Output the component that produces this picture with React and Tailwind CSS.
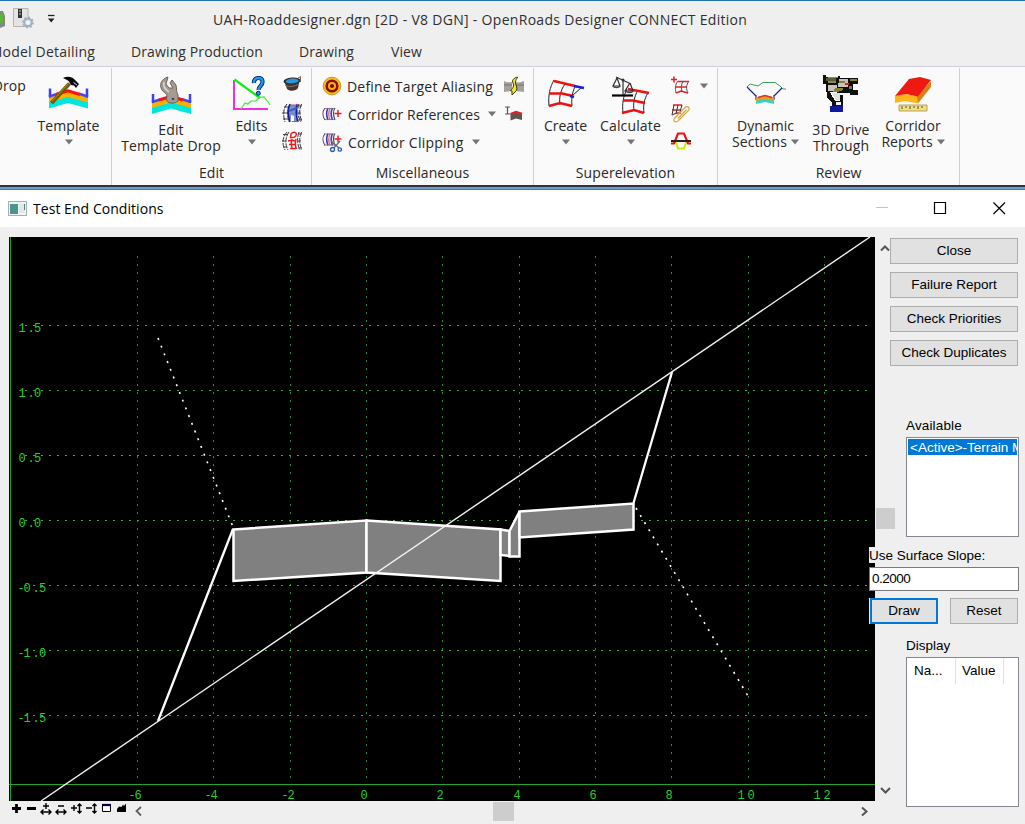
import React from "react";

/* ---------- icons ---------- */

function Bands() {
  return (
    <g>
      <path d="M1 32.500 V25 L20 20 L40 25 V32.500 L20 27 Z" fill="#00e5dc" />
      <path d="M1 26.500 V20 L20 14 L40 20 V26.500 L20 21 Z" fill="#f9b000" />
      <path d="M1 20.500 L10 17.700 M31 17.700 L40 20.500" fill="none" stroke="#4848f0" strokeWidth="2.500" />
      <path d="M8 18.500 L20 14.700 L32 18.500" fill="none" stroke="#ff1010" strokeWidth="3" />
      <path d="M2 12.500 V21.500 M39 12.500 V21.500" stroke="#4040ee" strokeWidth="2.500" />
    </g>
  );
}

const TemplateIcon = () => (
  <svg width="41" height="36" viewBox="0 0 41 36">
    <Bands />
    <path d="M3.500 27 L21.500 7.500" stroke="#6b5608" strokeWidth="4" />
    <path d="M4 25.500 L20.500 7.500" stroke="#93801c" strokeWidth="1.200" />
    <path d="M15 2 C20 -.5 25 1 28 5 L31 8 L28 12 L26 9.500 L23 9 L21 5.500 C19 3.500 17 3 15 2Z" fill="#080808" />
    <path d="M25.500 6.500 L29 9" stroke="#ddd" strokeWidth="1" />
  </svg>
);

const EditTemplateIcon = () => (
  <svg width="41" height="40" viewBox="0 0 41 40">
    <g transform="translate(0 5.500)"><Bands /></g>
    <path d="M17 1 C10 3 8 9 11 14 C13 17 15 17 16 19 L15.500 24 C17 28 24 28 27 25 L27 19 C25 16 26 13 25 9 L21 4 L19 7 L22 12 L18 12 L15 8 Z" fill="#a39b94" stroke="#6d6259" strokeWidth="1" />
    <path d="M13 6 C12 11 14 13 18 16" stroke="#ddd7d0" strokeWidth="1.500" fill="none" />
    <circle cx="22" cy="23" r="1.300" fill="#4e4844" />
  </svg>
);

const EditsIcon = () => (
  <svg width="39" height="36" viewBox="0 0 39 36">
    <path d="M2 4 V33 H36" fill="none" stroke="#f02ee0" strokeWidth="2" />
    <path d="M2.500 3.500 L28 22" stroke="#10f010" strokeWidth="2.300" />
    <path d="M9 33 L13 27 L16 28 L19 25 L24 25 L27 21.500 L32 21 L36 26 L38 29" fill="none" stroke="#32f032" strokeWidth="1.200" />
    <path d="M22 7 C21 1 31 0 30.500 6 C30.500 10 26.500 10 26.500 14" fill="none" stroke="#03275e" strokeWidth="4.200" />
    <path d="M22 7 C21 1 31 0 30.500 6 C30.500 10 26.500 10 26.500 14" fill="none" stroke="#159aff" strokeWidth="2.400" />
    <circle cx="26.300" cy="17.300" r="2" fill="#159aff" stroke="#03275e" />
  </svg>
);

const BucketIcon = () => (
  <svg width="20" height="20" viewBox="0 0 20 20">
    <path d="M2 5 L5 14 C8 17 14 16 16 13 L18 4 Z" fill="#46352c" />
    <path d="M3 10 C7 13 13 11 17 9" stroke="#80736b" fill="none" />
    <ellipse cx="10" cy="6" rx="8.500" ry="3.500" fill="#3c2c24" transform="rotate(-5 10 6)" />
    <ellipse cx="10.200" cy="6" rx="6.500" ry="2.400" fill="#2299e2" transform="rotate(-5 10 6)" />
    <path d="M16 3 L18.500 1.500 V7" stroke="#756257" fill="none" />
  </svg>
);

function Corridor({ inner }) {
  return (
    <g fill="none">
      <path d="M5 1 C1 6 1 12 3 19 M8 1 C5 6 5 12 7 19 M17 1 C15 6 15 12 19 19 M19.500 1 C17 7 17 12 20 18" stroke="#28282f" strokeWidth="1" strokeDasharray="5 1" />
      <path d="M2 4 H7 M0 10 H6 M1 16 H6 M15 3 H20 M16 10 H19 M16 17 H20" stroke="#44444c" strokeWidth="1" />
      {inner}
    </g>
  );
}

const CorridorBlueIcon = () => (
  <svg width="20" height="20" viewBox="0 0 20 20">
    <Corridor
      inner={
        <g>
          <path d="M8 2 H14 L16 8 L14 13 L16 19 H10 L7 14 L5 8 Z" fill="#7390d0" />
          <path d="M8 1 C5 7 6 12 8 19 M15 1 C14 6 14 13 16 19" stroke="#1818a8" strokeWidth="1.600" />
          <path d="M9 12 L12 13 L12 18 H9 Z" fill="#fff" />
          <path d="M9 2 H15 M10 18.500 H16" stroke="#d84848" strokeWidth="1.200" />
          <path d="M7 8 L15 5" stroke="#3b63b8" strokeWidth="2" />
        </g>
      }
    />
  </svg>
);

const CorridorRedIcon = () => (
  <svg width="20" height="20" viewBox="0 0 20 20">
    <g fill="none">
      <path d="M5 1 C0 7 0 13 3 19 M7 1 C3 7 3 13 6 19 M17 1 C15 7 15 13 18 19 M19.500 1 C17 7 17 13 20 19" stroke="#38383f" strokeDasharray="5 1" />
      <path d="M1 3.500 H6 M0 10 H4 M1 16 H5 M16 3 H20 M16 10 H19 M16 17 H20" stroke="#44444c" />
      <path d="M9 3 C11 .5 14 1 14.500 3 C14 6 12 7 8.500 6.500 Z M6 10 L10 9 L14 10.500 M10 8 C9 12 9 15 10.500 18 M14 8 C13 12 13 15 14.500 18 M7 13.500 H14 M8 17.500 H14" stroke="#f21a1a" strokeWidth="1.500" />
    </g>
  </svg>
);

const TargetIcon = () => (
  <svg width="20" height="20" viewBox="0 0 20 20">
    <circle cx="10" cy="10" r="8.800" fill="#f6c01c" stroke="#c99a1e" />
    <circle cx="10" cy="10" r="5.300" fill="#f7b020" stroke="#8e0d08" strokeWidth="2.600" />
    <circle cx="10" cy="10" r="2.100" fill="#7e0806" />
  </svg>
);

function MiniCorridor() {
  return (
    <g fill="none">
      <path d="M3 4 C0 8 0 11 3 16 M13 4 C11 7 11 11 13 16" stroke="#444" strokeWidth="1.100" />
      <path d="M6 4 C4 8 4 11 6 16 M10.500 4 C8.500 8 8.500 11 10.500 16" stroke="#3f35b0" strokeWidth="1.600" />
      <path d="M8.200 4 C6.200 8 6.200 12 8.200 16" stroke="#d86e8e" strokeWidth="1.400" />
      <path d="M2 4.500 H12 M2 15.500 H13" stroke="#7a6a83" strokeWidth=".8" />
      <path d="M12.500 9.500 H19.500 M16 6 V13" stroke="#ee1c24" strokeWidth="1.500" />
    </g>
  );
}

const ReferenceIcon = () => (
  <svg width="20" height="20" viewBox="0 0 20 20"><MiniCorridor /></svg>
);

const ClippingIcon = () => (
  <svg width="20" height="22" viewBox="0 0 20 22">
    <g transform="translate(0 -1.500)"><MiniCorridor /></g>
    <path d="M9 10 L18 18 M18 10 L11 18" stroke="#6b7078" strokeWidth="1.400" />
    <circle cx="10.500" cy="18.500" r="2" fill="#fff" stroke="#2e58a8" strokeWidth="1.300" />
    <circle cx="17.700" cy="18.500" r="1.700" fill="#fff" stroke="#2e58a8" strokeWidth="1.300" />
  </svg>
);

const TerrainIcon = () => (
  <svg width="20" height="20" viewBox="0 0 20 20">
    <path d="M0 5 C3 7 5 6 8 6 V15 L0 16 Z M12 6 C15 7 17 6 20 5 V16 L12 15 Z" fill="#a5a09d" />
    <path d="M0 9 H8 M12 9 H20" stroke="#77706c" />
    <path d="M13.500 1 C10 2 7.500 4 9 7 C10.500 10 9 12 6.500 14.500 L8 15 L8 19 L12.500 14.500 C14 11 11 9 11.500 6 C11.500 4 13 3 13.500 1 Z" fill="#f4e32c" stroke="#3c3812" strokeWidth="1" />
  </svg>
);

const RoadEndIcon = () => (
  <svg width="20" height="18" viewBox="0 0 20 18">
    <path d="M1 2 H6 M3.500 2 V9 M1 9 H6" stroke="#555" strokeWidth="1.200" />
    <path d="M6.500 9 L12 6.500 L18 8.500 V15 L12 13.500 L6.500 15.500 Z" fill="#5d5552" />
    <path d="M6.500 9 L12 6.800 L18 8.800" fill="none" stroke="#df2028" strokeWidth="2" />
  </svg>
);

const CreateIcon = () => (
  <svg width="40" height="36" viewBox="0 0 40 36" fill="none">
    <path d="M8 4 C4 11 2 19 3 30 M19 8 C14 15 13 22 14 29 M30 9 C27 14 25 21 26 30 M36 11 L26 20" stroke="#222" strokeWidth="1" />
    <path d="M8 5 L29 10 M3 17.500 H16 L27 20 M3 30 L14 27 L26 30" stroke="#ee1010" strokeWidth="2.600" />
    <path d="M28 10 L38 12 M24 20 L28 21" stroke="#1520df" strokeWidth="2.500" />
  </svg>
);

const CalculateIcon = () => (
  <svg width="40" height="42" viewBox="0 0 40 42" fill="none">
    <path d="M16 13 C12 21 11 28 12 37 M27 14 C23 21 22 28 23 35 M37 17 C33 23 32 30 33 37" stroke="#222" />
    <path d="M17 13 L38 17 M12 24.500 H22 L34 27 M11 37 L23 34 L33 37" stroke="#ee1010" strokeWidth="2.600" />
    <path d="M12 19 V4 M5 1 L20 8 M6 2 L2 10 H9 L6 2 M19 7 L14 15 H22 L19 7" stroke="#303030" strokeWidth="1.200" />
    <path d="M1 19.500 H22" stroke="#050505" strokeWidth="2.200" />
    <path d="M2 10 C3 12 8 12 9 10 M15 15 C16 17 21 17 22 15" stroke="#444" strokeWidth="1.500" />
    <circle cx="12" cy="4" r="1.500" fill="#333" />
  </svg>
);

const AddGridIcon = () => (
  <svg width="20" height="20" viewBox="0 0 20 20" fill="none">
    <path d="M0 4.500 H6 M3 1.500 V7.500" stroke="#f21a1a" strokeWidth="1.500" />
    <path d="M7 6.500 H18 M4 12 H16 M5 18 L10 16 L17 18" stroke="#e52020" strokeWidth="1.500" />
    <path d="M7 6 C4 10 4 13 5 18 M12 6 C10 10 10 13 11 17 M18 6 C15 10 15 14 17 18" stroke="#555" />
  </svg>
);

const ClipGridIcon = () => (
  <svg width="20" height="20" viewBox="0 0 20 20" fill="none">
    <path d="M2 2 H11 M1 7 H10 M1 12 L6 10 H10" stroke="#e52020" strokeWidth="1.300" />
    <path d="M3 2 L1 12 M7 2 L5 11 M11 2 L9 9" stroke="#333" />
    <path d="M3 16 L14 4.500 C16 2.500 19 4 18 7 L8 17 C6 20 2 19 3 16 M7 15.500 L15.500 6.500" stroke="#d6a545" strokeWidth="1.200" />
  </svg>
);

const SuperIcon = () => (
  <svg width="20" height="20" viewBox="0 0 20 20" fill="none">
    <path d="M5 11 L7 17.500 H13 L15 11" stroke="#c8ee13" strokeWidth="2.200" />
    <path d="M0 12.500 H3 L7 2.500 H13 L17 12.500 H20" stroke="#e71515" strokeWidth="2.200" />
    <path d="M0 10 H20" stroke="#222" strokeWidth="2" />
  </svg>
);

const DynamicIcon = () => (
  <svg width="40" height="28" viewBox="0 0 40 28" fill="none">
    <path d="M1 6 L4 3 L12 5 L17 1.500 H29 L34 5 L37 8 H40" stroke="#3da05a" strokeWidth="1" />
    <path d="M1 6 L10 15 M36 7 L28 15 M10 14 V18 L14 16 H24 L28 18 V14" stroke="#21219d" strokeWidth="1.200" />
    <path d="M10 19 L19 17 L28 19 V23 L19 21 L10 23 Z" fill="#30d5cf" />
    <path d="M10 17 L19 14 L28 17 V20 L19 18 L10 20 Z" fill="#ec9b22" />
    <path d="M12 16.500 L19 14.500 L26 16.500" stroke="#cd3a2a" strokeWidth="1.600" />
  </svg>
);

const CameraIcon = () => (
  <svg width="36" height="38" viewBox="0 0 36 38" shapeRendering="crispEdges">
    <path d="M0 0 H3 V2 H15 V1 H17 V3 H26 V3 H35 V9 H30 V15 H35 V20 H27 V18 H14 V17 H3 V9 H0 Z" fill="#101010" />
    <path d="M5 2 H15 V3 H5 Z M5 6 H13 V8 H5 Z" fill="#8b8a5a" />
    <path d="M3 3 H13 V6 H3 Z" fill="#5d5c2e" />
    <path d="M16 4 H25 V12 H15 Z M5 10 H14 V16 H5Z" fill="#c8c4bd" />
    <path d="M16 6 H22 V8 H16Z M12 13 H20 V15 L15 17 H10 Z M27 4 H34 V6 H27Z" fill="#85822f" />
    <path d="M22 8 H26 V10 H22 Z" fill="#e02424" />
    <path d="M26 11 H29 V14 H26 Z" fill="#777" />
    <path d="M4 17 H7 L12 26 H17 V20 H20 V32 H9 V28 L4 22 Z" fill="#101010" />
    <path d="M9 18 H17 V25 H13 Z" fill="#e0e0e0" />
    <path d="M7 31 H20 V37 H7 Z" fill="#1018a0" />
    <path d="M13 27 H18 V30 H13 Z" fill="#f3f3f3" />
  </svg>
);

const ReportsIcon = () => (
  <svg width="38" height="38" viewBox="0 0 38 38">
    <path d="M1 20 L11 18 L24 20 V27.500 L11 25 L1 27 Z" fill="#ffb41a" />
    <path d="M23 20 L37 5 V11 L24 27.500 Z" fill="#d98018" />
    <path d="M1 20 L15 3 L26 1 L37 4 L24 20.500 L12 18 Z" fill="#ed1a12" />
    <path d="M5 29 H33 V35 H5 Z" fill="#f0df83" stroke="#a3914c" strokeWidth=".8" />
    <path d="M8 30 V33 M12 30 V32 M16 30 V33 M20 30 V32 M24 30 V33 M28 30 V32" stroke="#524721" />
  </svg>
);

function Caret() {
  return (
    <svg width="8" height="6" viewBox="0 0 8 6" className="inline-block shrink-0">
      <path d="M0 .5 H8 L4 5.500 Z" fill="#747474" />
    </svg>
  );
}

/* ---------- ribbon ---------- */

function BigButton({ className, icon, iconBox, lines, below, inline, tracking = "" }) {
  return (
    <div className={`flex shrink-0 flex-col items-center ${className}`}>
      <div className={`flex items-start justify-center ${iconBox}`}>{icon}</div>
      {lines.map((line, i) => (
        <div key={line} className={`flex h-4 items-center gap-1 whitespace-nowrap leading-4 ${tracking}`}>
          {line}
          {inline && i === lines.length - 1 && <Caret />}
        </div>
      ))}
      {below && <div className="flex h-4 items-center"><Caret /></div>}
    </div>
  );
}

function Group({ className, label, children }) {
  return (
    <div className={`flex shrink-0 flex-col border-r border-[#cfcfd6] ${className}`}>
      <div className="flex h-[94px]">{children}</div>
      <div className="flex h-[20px] items-center justify-center">{label}</div>
    </div>
  );
}

function SmallColumn({ className, children }) {
  return <div className={`flex shrink-0 flex-col ${className}`}>{children}</div>;
}

function MiscRow({ icon, label, caret, extra, labelClass = "" }) {
  return (
    <div className="flex h-7 items-center">
      <div className="flex w-[25px] items-center">{icon}</div>
      <span className={`whitespace-nowrap ${labelClass}`}>{label}</span>
      {caret && <span className="ml-[8px] flex"><Caret /></span>}
      <div className="ml-auto flex">{extra}</div>
    </div>
  );
}

function Ribbon() {
  return (
    <div className="flex h-[119px] border-t border-[#cfcfdb] bg-[#fafafb] pt-[1px] text-[14px] text-[#282828]">
      <Group className="w-[112px]" label="">
        <div className="flex w-[26px] shrink-0 justify-end overflow-hidden pt-[8px] leading-5 tracking-[0.1px]">Drop</div>
        <BigButton className="w-[85px] pt-[8px]" iconBox="h-[42px]" icon={<TemplateIcon />} lines={["Template"]} below tracking="tracking-[0.1px]" />
      </Group>
      <Group className="w-[200px]" label="Edit">
        <BigButton className="w-[118px] pt-[8px]" iconBox="h-[46px]" icon={<EditTemplateIcon />} lines={["Edit", "Template Drop"]} tracking="tracking-[0.15px]" />
        <BigButton className="w-[43px] pt-[8px]" iconBox="h-[42px]" icon={<EditsIcon />} lines={["Edits"]} below tracking="tracking-[0.1px]" />
        <SmallColumn className="ml-[9px] gap-[8px] pt-[7px]">
          <BucketIcon />
          <CorridorBlueIcon />
          <CorridorRedIcon />
        </SmallColumn>
      </Group>
      <Group className="w-[222px]" label={<span className="tracking-[0.1px]">Miscellaneous</span>}>
        <div className="flex flex-1 flex-col pl-[10px] pr-[9px] pt-[4px]">
          <MiscRow icon={<TargetIcon />} label="Define Target Aliasing" extra={<TerrainIcon />} labelClass="tracking-[0.2px]" />
          <MiscRow icon={<ReferenceIcon />} label="Corridor References" caret extra={<RoadEndIcon />} labelClass="ml-px tracking-[0.05px]" />
          <MiscRow icon={<ClippingIcon />} label="Corridor Clipping" caret labelClass="ml-px tracking-[0.25px]" />
        </div>
      </Group>
      <Group className="w-[184px]" label={<span className="tracking-[0.1px]">Superelevation</span>}>
        <BigButton className="w-[63px] pt-[8px]" iconBox="h-[42px]" icon={<CreateIcon />} lines={["Create"]} below />
        <BigButton className="w-[67px] pt-[8px]" iconBox="h-[42px]" icon={<CalculateIcon />} lines={["Calculate"]} below tracking="tracking-[0.15px]" />
        <SmallColumn className="ml-[7px] gap-[8px] pt-[7px]">
          <AddGridIcon />
          <ClipGridIcon />
          <SuperIcon />
        </SmallColumn>
        <div className="ml-[9px] flex pt-[15px]"><Caret /></div>
      </Group>
      <Group className="w-[242px]" label="Review">
        <BigButton className="w-[95px] pt-[13px]" iconBox="h-[37px]" icon={<DynamicIcon />} lines={["Dynamic", "Sections"]} inline tracking="tracking-[0.05px]" />
        <BigButton className="w-[56px] pt-[7px]" iconBox="h-[47px]" icon={<CameraIcon />} lines={["3D Drive", "Through"]} tracking="tracking-[0.15px]" />
        <BigButton className="w-[88px] pt-[8px]" iconBox="h-[42px]" icon={<ReportsIcon />} lines={["Corridor", "Reports"]} inline tracking="tracking-[0.05px]" />
      </Group>
    </div>
  );
}

function TopBar() {
  return (
    <div className="h-[66px] border-t border-[#2573ad] bg-[#efefef] text-[#303030]">
      <div className="flex h-[37px] items-center">
        <svg width="60" height="34" viewBox="0 0 60 34" className="shrink-0">
          <path d="M0 8 H3 L5 13 V23 L0 25 Z" fill="#858585" />
          <path d="M0 11 H3 V19 L0 21 Z" fill="#55b936" />
          <path d="M13.500 5.500 H28 V23.500 H13.500 Z" fill="#e4e4e4" stroke="#b4b4b4" />
          <path d="M18 6 H22 V15 H18 Z" fill="#333" />
          <path d="M19 8 H21 M19 11 H21" stroke="#ccc" />
          <circle cx="28" cy="19.500" r="3.800" fill="#dfe6ed" stroke="#9fb0c2" strokeWidth="2" />
          <circle cx="28" cy="19.500" r="5.200" fill="none" stroke="#9fb0c2" strokeWidth="1.500" strokeDasharray="2 2" />
          <circle cx="28" cy="19.500" r="1.500" fill="#fafafa" />
          <path d="M48 12.500 H54.500" stroke="#222" strokeWidth="1.300" />
          <path d="M48 15.500 H54.500 L51.200 19.500 Z" fill="#222" />
        </svg>
        <div className="ml-[153px] whitespace-nowrap text-[14px] tracking-[0.3px]">UAH-Roaddesigner.dgn [2D - V8 DGN] - OpenRoads Designer CONNECT Edition</div>
      </div>
      <div className="flex h-[27px] items-center text-[14px] tracking-[0.12px]">
        <div className="flex w-[95px] shrink-0 justify-end overflow-hidden whitespace-nowrap tracking-[0.2px]">Model Detailing</div>
        <div className="ml-[36px] w-[168px] whitespace-nowrap">Drawing Production</div>
        <div className="w-[92px]">Drawing</div>
        <div>View</div>
      </div>
    </div>
  );
}

/* ---------- cross section plot ---------- */

const X_TICKS = [-6, -4, -2, 0, 2, 4, 6, 8, 10, 12];
const Y_TICKS = [1.5, 1, 0.5, 0, -0.5, -1, -1.5];
const px = (v) => Math.round(357 + v * 38.16) + 0.5;
const py = (v) => Math.round(283 - v * 130) + 0.5;

function yGlyphs(v) {
  const s = Math.abs(v).toFixed(1);
  const sign = v < 0;
  const base = sign ? 14.5 : 9.5;
  return (
    <text key={v} y={py(v) + 6}>
      {sign && <tspan x="8.5">-</tspan>}
      <tspan x={base}>{s[0]}</tspan>
      <tspan x={base + 9}>.</tspan>
      <tspan x={base + 15.5}>{s[2]}</tspan>
    </text>
  );
}

function xGlyphs(v) {
  const s = String(v);
  const x = px(v);
  if (s.length === 1) return <text key={v} x={x - 6} y="561.5">{s}</text>;
  return (
    <text key={v} y="561.5">
      <tspan x={v < 0 ? x - 9 : x - 11}>{s[0]}</tspan>
      <tspan x={v < 0 ? x - 3 : x - 1}>{s[1]}</tspan>
    </text>
  );
}

function Plot() {
  return (
    <svg width="866" height="564" viewBox="0 0 866 564" className="block bg-black">
      <g stroke="#27932f" strokeWidth="1" strokeDasharray="2 6">
        {X_TICKS.map((v) => <line key={v} x1={px(v)} x2={px(v)} y1="19" y2="544" />)}
      </g>
      <g stroke="#2fb53a" strokeWidth="1" strokeDasharray="2 6">
        {Y_TICKS.map((v) => <line key={v} x1="16" x2="862" y1={py(v)} y2={py(v)} />)}
      </g>
      <path d="M1.500 0 V564 M0 547.500 H866" stroke="#23a52c" />
      <g fill="#24d030" className="font-['Liberation_Mono',monospace] text-[12px]">
        {Y_TICKS.map(yGlyphs)}
        {X_TICKS.map(xGlyphs)}
      </g>
      <g fill="#808080" stroke="#fff" strokeWidth="2.500">
        <path d="M224.500 292.500 L357.500 283.500 V335.500 L224.500 344 Z" />
        <path d="M357.500 283.500 L491.500 292.500 V344 L357.500 335.500 Z" />
        <path d="M491.500 292.500 L500.500 294 V319 L491.500 318 Z" />
        <path d="M500.500 294 L510.500 274.500 V319.500 H500.500 Z" />
        <path d="M510.500 274.500 L624.500 266.500 V292.500 L510.500 300.500 Z" />
      </g>
      <path d="M224 292 L149 484 M624.500 266 L663 135" stroke="#fff" strokeWidth="2.300" />
      <path d="M32 564 L861 0" stroke="#f1f1f1" strokeWidth="1.400" />
      <path d="M149 101 L224 290 M627 271 L739 459" stroke="#fff" strokeWidth="1.600" strokeDasharray="2 6.300" />
    </svg>
  );
}

function BottomBar() {
  return (
    <div className="flex h-[23px] items-center">
      <svg width="866" height="23" viewBox="0 0 866 23" fill="none">
        <path d="M3 7.500 H12 M7.500 3 V12 M18 7.500 H27" stroke="#000" strokeWidth="2.800" />
        <g stroke="#000" strokeWidth="1.400">
          <path d="M37 2 V8 M34 5 H40 M32 11 H42 M34.500 8.500 L32 11 L34.500 13.500 M39.500 8.500 L42 11 L39.500 13.500" />
          <path d="M49 5 H55 M47 11 H57 M49.500 8.500 L47 11 L49.500 13.500 M54.500 8.500 L57 11 L54.500 13.500" />
          <path d="M62 7 H68 M65 4 V10 M70.500 3 V12 M68.500 5 L70.500 3 L72.500 5 M68.500 10 L70.500 12 L72.500 10" />
          <path d="M77 7 H83 M85.500 3 V12 M83.500 5 L85.500 3 L87.500 5 M83.500 10 L85.500 12 L87.500 10" />
          <path d="M93.500 4 H101.500 V10.500 H93.500 Z" fill="#fff" strokeWidth="1" />
          <path d="M93 4 H102" stroke="#00003c" strokeWidth="2.200" />
        </g>
        <path d="M108 11 V8 L110 5.500 L112.500 6 L114 3.500 L115 5 L117 2.500 V11 Z" fill="#000" />
        <path d="M132 6 L127.500 10 L132 14.500" stroke="#606060" strokeWidth="1.800" />
        <rect x="484" y="1" width="21" height="19" fill="#cdcdcd" />
        <path d="M853 6.500 L857.500 10.500 L853 14.500" stroke="#555" strokeWidth="2" />
      </svg>
    </div>
  );
}

/* ---------- side panel ---------- */

function Button({ children, className = "" }) {
  return (
    <div className={`flex h-[26px] items-center justify-center border bg-[#e1e1e1] pt-px ${className || "border-[#adadad]"}`}>
      {children}
    </div>
  );
}

function SidePanel() {
  return (
    <div className="w-[135px] shrink-0 pt-[11px] font-['Liberation_Sans',Arial,sans-serif] text-[13.500px] text-black">
      <div className="flex w-[128px] flex-col gap-2">
        <Button>Close</Button>
        <Button>Failure Report</Button>
        <Button>Check Priorities</Button>
        <Button>Check Duplicates</Button>
      </div>
      <div className="ml-4 mt-[51px] h-5 leading-[18px] tracking-[0.15px]">Available</div>
      <div className="ml-4 h-[100px] w-[113px] border border-[#828790] bg-white p-px">
        <div className="h-4 overflow-hidden whitespace-nowrap bg-[#0078d7] pl-[2px] leading-[17px] text-white">&lt;Active&gt;-Terrain Model</div>
      </div>
      <div className="relative -ml-[21px] mt-[10px] h-4 bg-[#efefef] leading-[17px]">Use Surface Slope:</div>
      <div className="relative -ml-[21px] mt-1 flex h-6 w-[150px] items-center border border-[#7a7a7a] bg-white pl-[2px] tracking-[-0.5px]">0.2000</div>
      <div className="relative -ml-[21px] mt-[7px] flex h-[27px] items-start">
        <div className="bg-[#efefef] pl-px">
          <Button className="w-[68px] border-2 border-[#0078d7]">Draw</Button>
        </div>
        <Button className="ml-3 w-[68px] border-[#adadad]">Reset</Button>
      </div>
      <div className="ml-4 mt-[11px] h-[21px] leading-[20px]">Display</div>
      <div className="ml-4 h-[150px] w-[113px] border border-[#828790] bg-white">
        <div className="flex h-[26px] items-center">
          <div className="flex h-full w-[49px] items-center border-r border-[#e2e2e2] pl-[7px] pt-px">Na...</div>
          <div className="flex h-full w-[48px] items-center border-r border-[#e2e2e2] pl-[6px] pt-px">Value</div>
        </div>
      </div>
    </div>
  );
}

function VerticalScroll() {
  return (
    <div className="relative flex w-[15px] shrink-0 flex-col overflow-visible pl-px pt-[16px]">
      <svg width="20" height="10" viewBox="0 0 20 10" className="max-w-none" fill="none">
        <path d="M5 7.500 L9 3.500 L13 7.500" stroke="#555" strokeWidth="2" />
      </svg>
      <div className="mt-[255px] h-[21px] w-[19px] bg-[#cdcdcd]" />
      <svg width="20" height="12" viewBox="0 0 20 12" className="mt-[256px] max-w-none" fill="none">
        <path d="M5 3 L9.500 7.500 L14 3" stroke="#555" strokeWidth="2" />
      </svg>
    </div>
  );
}

function Dialog() {
  return (
    <div className="flex flex-1 flex-col bg-[#efefef]">
      <div className="flex h-[37px] items-center bg-white pl-2 text-black">
        <svg width="19" height="15" viewBox="0 0 19 15" className="shrink-0">
          <rect x=".5" y=".5" width="18" height="14" fill="#f0f4f6" stroke="#a8adb1" />
          <rect x="2" y="3" width="8" height="10" fill="#4c9490" />
          <path d="M11 3 H17 V12 H11 Z" fill="#dfe9e8" />
          <path d="M16.500 3 V9" stroke="#4b8580" />
        </svg>
        <div className="ml-[6px] whitespace-nowrap text-[14px] tracking-[0.05px]">Test End Conditions</div>
        <svg width="130" height="20" viewBox="0 0 130 20" className="ml-auto mr-[19px]" fill="none">
          <path d="M0 8.500 H12" stroke="#c4c4c4" />
          <path d="M58.500 3.500 H69.500 V14.500 H58.500 Z" stroke="#000" strokeWidth="1.200" />
          <path d="M117.500 3.500 L129 15 M129 3.500 L117.500 15" stroke="#000" strokeWidth="1.200" />
        </svg>
      </div>
      <div className="flex flex-1">
        <div className="ml-[9px] w-[866px] shrink-0 pt-[10px]">
          <Plot />
          <BottomBar />
        </div>
        <VerticalScroll />
        <SidePanel />
      </div>
    </div>
  );
}

export default function App() {
  return (
    <div className="flex h-[824px] w-[1025px] flex-col overflow-hidden font-['Open_Sans','Noto_Sans',sans-serif]">
      <TopBar />
      <Ribbon />
      <div className="h-[2px] shrink-0 bg-[#30343f]" />
      <div className="h-[3px] shrink-0 border-b border-[#367db5] bg-[#6f9bd0]" />
      <Dialog />
    </div>
  );
}
